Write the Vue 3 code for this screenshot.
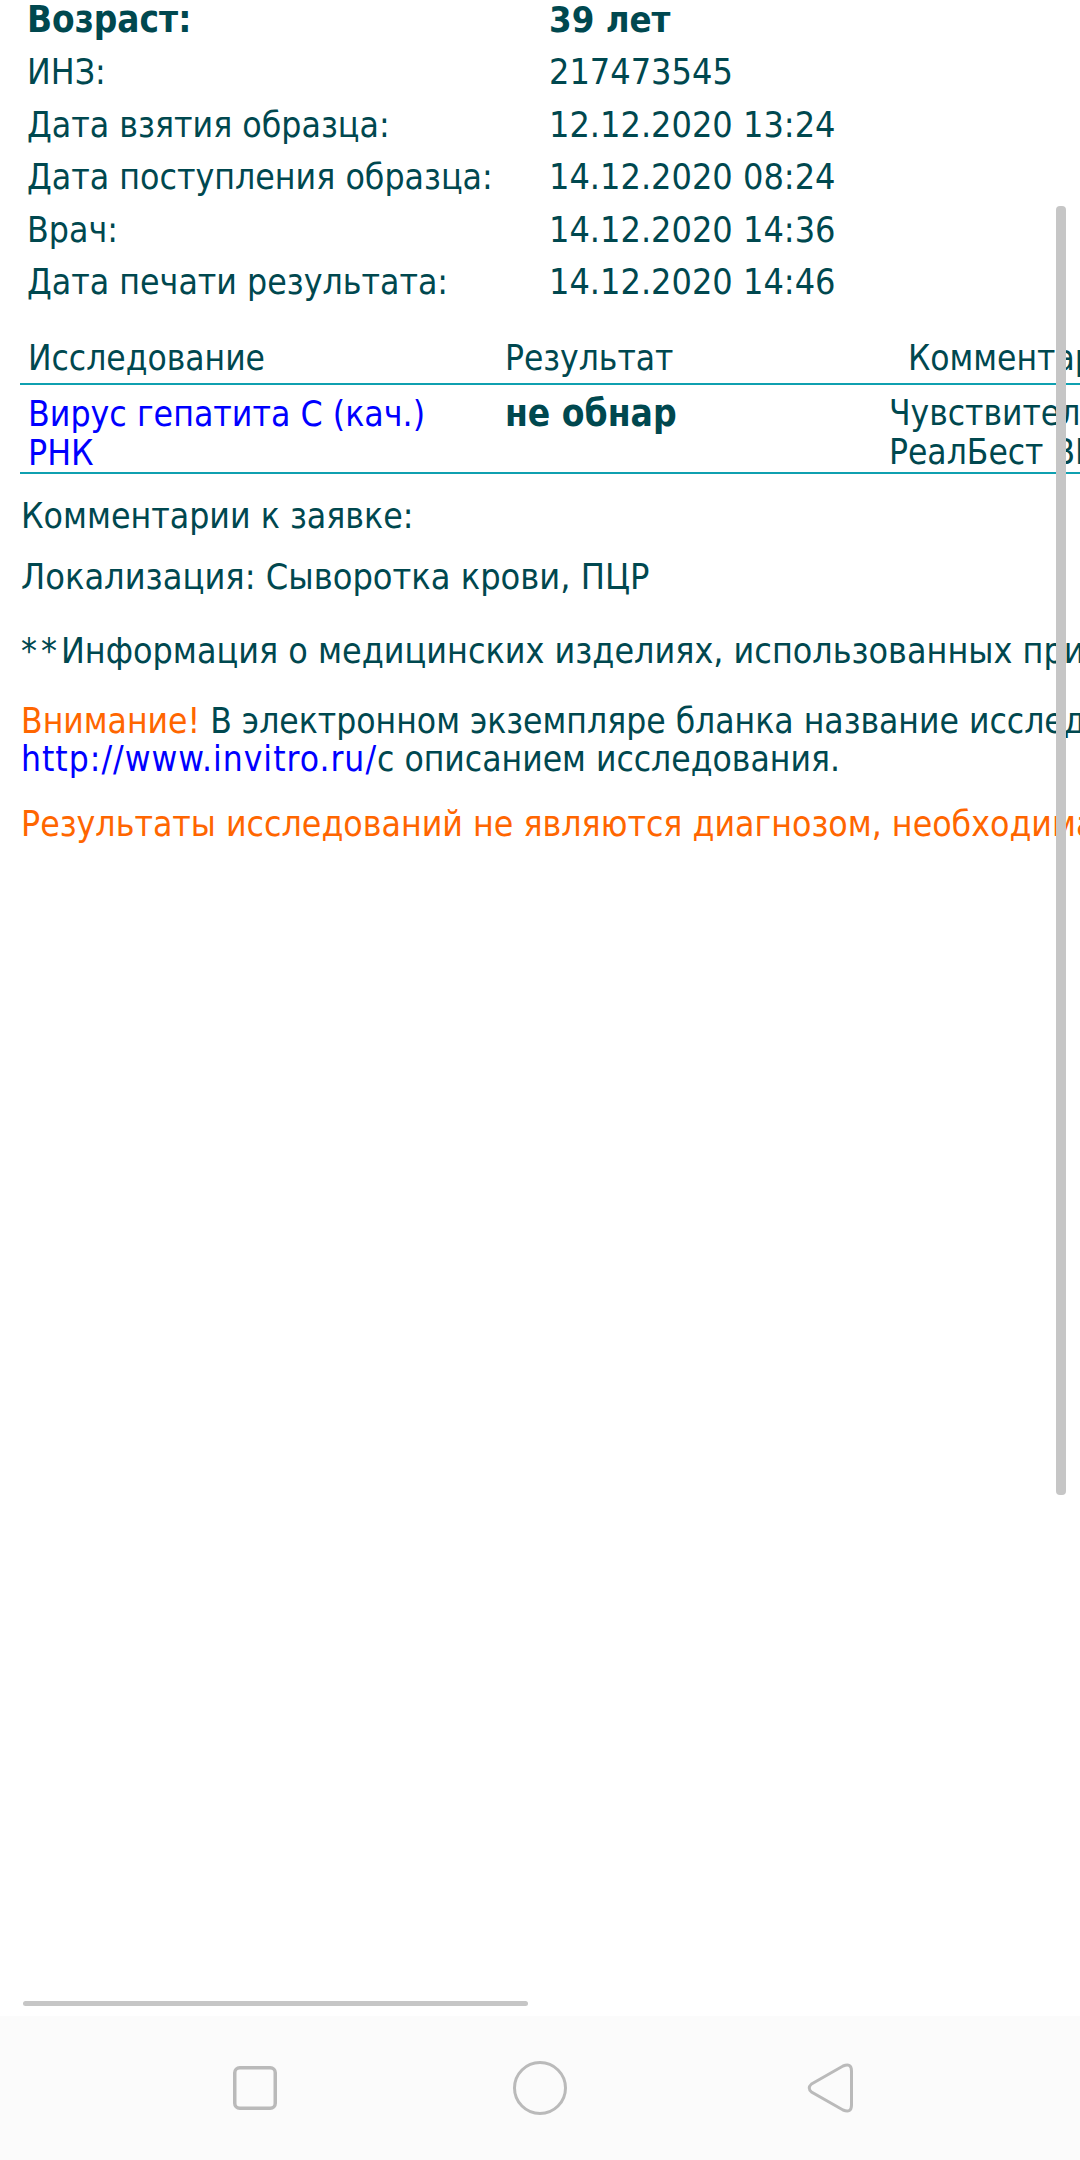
<script setup>
const info = [
  { label: 'Возраст:', value: '39 лет', bold: true },
  { label: 'ИНЗ:', value: '217473545' },
  { label: 'Дата взятия образца:', value: '12.12.2020 13:24' },
  { label: 'Дата поступления образца:', value: '14.12.2020 08:24' },
  { label: 'Врач:', value: '14.12.2020 14:36' },
  { label: 'Дата печати результата:', value: '14.12.2020 14:46' }
]
</script>

<template>
  <div class="screen">
    <main class="page">
      <section class="info">
        <div v-for="row in info" :key="row.label" class="info-row" :class="{ bold: row.bold }">
          <span>{{ row.label }}</span>
          <span class="value">{{ row.value }}</span>
        </div>
      </section>

      <section class="table">
        <div class="thead">
          <span>Исследование</span>
          <span>Результат</span>
          <span class="th-comment">Комментарий</span>
        </div>
        <div class="tbody">
          <a class="link test">Вирус гепатита С (кач.)<br />РНК</a>
          <b class="result">не обнар</b>
          <span class="note">Чувствительность<br />РеалБест ВГС</span>
        </div>
      </section>

      <section class="notes">
        <p class="n1">Комментарии к заявке:</p>
        <p class="n2">Локализация: Сыворотка крови, ПЦР</p>
        <p class="n3"><span class="stars">**</span>Информация о медицинских изделиях, использованных при</p>
        <p class="n4"><span class="orange">Внимание!</span> В электронном экземпляре бланка название исследования<br /><a class="link url">http://www.invitro.ru/</a>с описанием исследования.</p>
        <p class="n5 orange">Результаты исследований не являются диагнозом, необходима</p>
      </section>
    </main>

    <div class="vbar"></div>
    <div class="hbar"></div>

    <nav class="navbar">
      <svg class="ico" width="44" height="44" viewBox="0 0 44 44"><rect x="1.75" y="1.75" width="40.5" height="40.5" rx="5" /></svg>
      <svg class="ico" width="54" height="54" viewBox="0 0 54 54"><circle cx="27" cy="27" r="25.5" /></svg>
      <svg class="ico" width="45" height="50" viewBox="0 0 45 50"><path d="M3.5 21 L35 3 Q43.5 -0.5 43.5 8 V42 Q43.5 50.5 35 47 L3.5 29 Q-1 25 3.5 21 Z" /></svg>
    </nav>
  </div>
</template>

<style>
html, body { margin: 0; background: #fff; }
</style>

<style scoped>
.screen {
  position: relative;
  width: 1080px;
  height: 2160px;
  overflow: hidden;
  display: flex;
  flex-direction: column;
  background: #fff;
  color: #00484f;
  font-family: "DejaVu Sans Condensed", "DejaVu Sans", sans-serif;
  font-size: 35.3px;
}
.page { flex: 1; min-height: 0; overflow: hidden; white-space: nowrap; }
.info { margin-top: -6px; padding-left: 27px; }
.info-row { display: grid; grid-template-columns: 522px auto; height: 52.4px; line-height: 52.4px; justify-content: start; }
.value { font-size: 35.7px; }
.info-row.bold { font-weight: 700; font-size: 36.6px; }
.info-row.bold .value { font-size: 36.2px; }
.table { margin: 25px 0 0 20px; width: 1300px; }
.thead, .tbody { display: grid; grid-template-columns: 477px 382px auto; padding-left: 8px; }
.thead { height: 50px; line-height: 50px; border-bottom: 2px solid #0fa0b0; font-size: 35px; }
.th-comment { margin-left: 21px; }
.tbody { height: 89px; line-height: 39px; padding-top: 9px; box-sizing: border-box; border-bottom: 2px solid #0fa0b0; }
.result { font-weight: 700; font-size: 36.8px; }
.note { margin-left: 2px; font-size: 35px; }
.link { color: #0000ff; }
.url { letter-spacing: 1px; }
.orange { color: #ff6600; }
.notes { padding-left: 21px; font-size: 35.8px; }
.notes p { margin: 0; line-height: 37px; }
.stars { letter-spacing: 4px; }
.n1 { margin-top: 23px !important; font-size: 35.3px; }
.n2 { margin-top: 24px !important; }
.n3 { margin-top: 37px !important; font-size: 35.5px; }
.n4 { margin-top: 33px !important; font-size: 35.1px; line-height: 38px !important; }
.n5 { margin-top: 27px !important; font-size: 35.3px; }
.vbar {
  position: absolute; left: 1056px; top: 206px; width: 10px; height: 1289px;
  background: #c6c6c6; border-radius: 4px;
}
.hbar {
  position: absolute; left: 23px; top: 2001px; width: 505px; height: 5px;
  background: #c6c6c6; border-radius: 3px;
}
.navbar {
  height: 144px; flex: none; background: #fbfbfb;
  display: grid;
  grid-template-columns: 233px 44px 236px 54px 241px 45px;
  align-items: center;
}
.ico { display: block; overflow: visible; fill: none; stroke: #bababa; stroke-width: 3; }
.ico:nth-child(1) { grid-column: 2; stroke-width: 3.5; }
.ico:nth-child(2) { grid-column: 4; }
.ico:nth-child(3) { grid-column: 6; }
</style>
